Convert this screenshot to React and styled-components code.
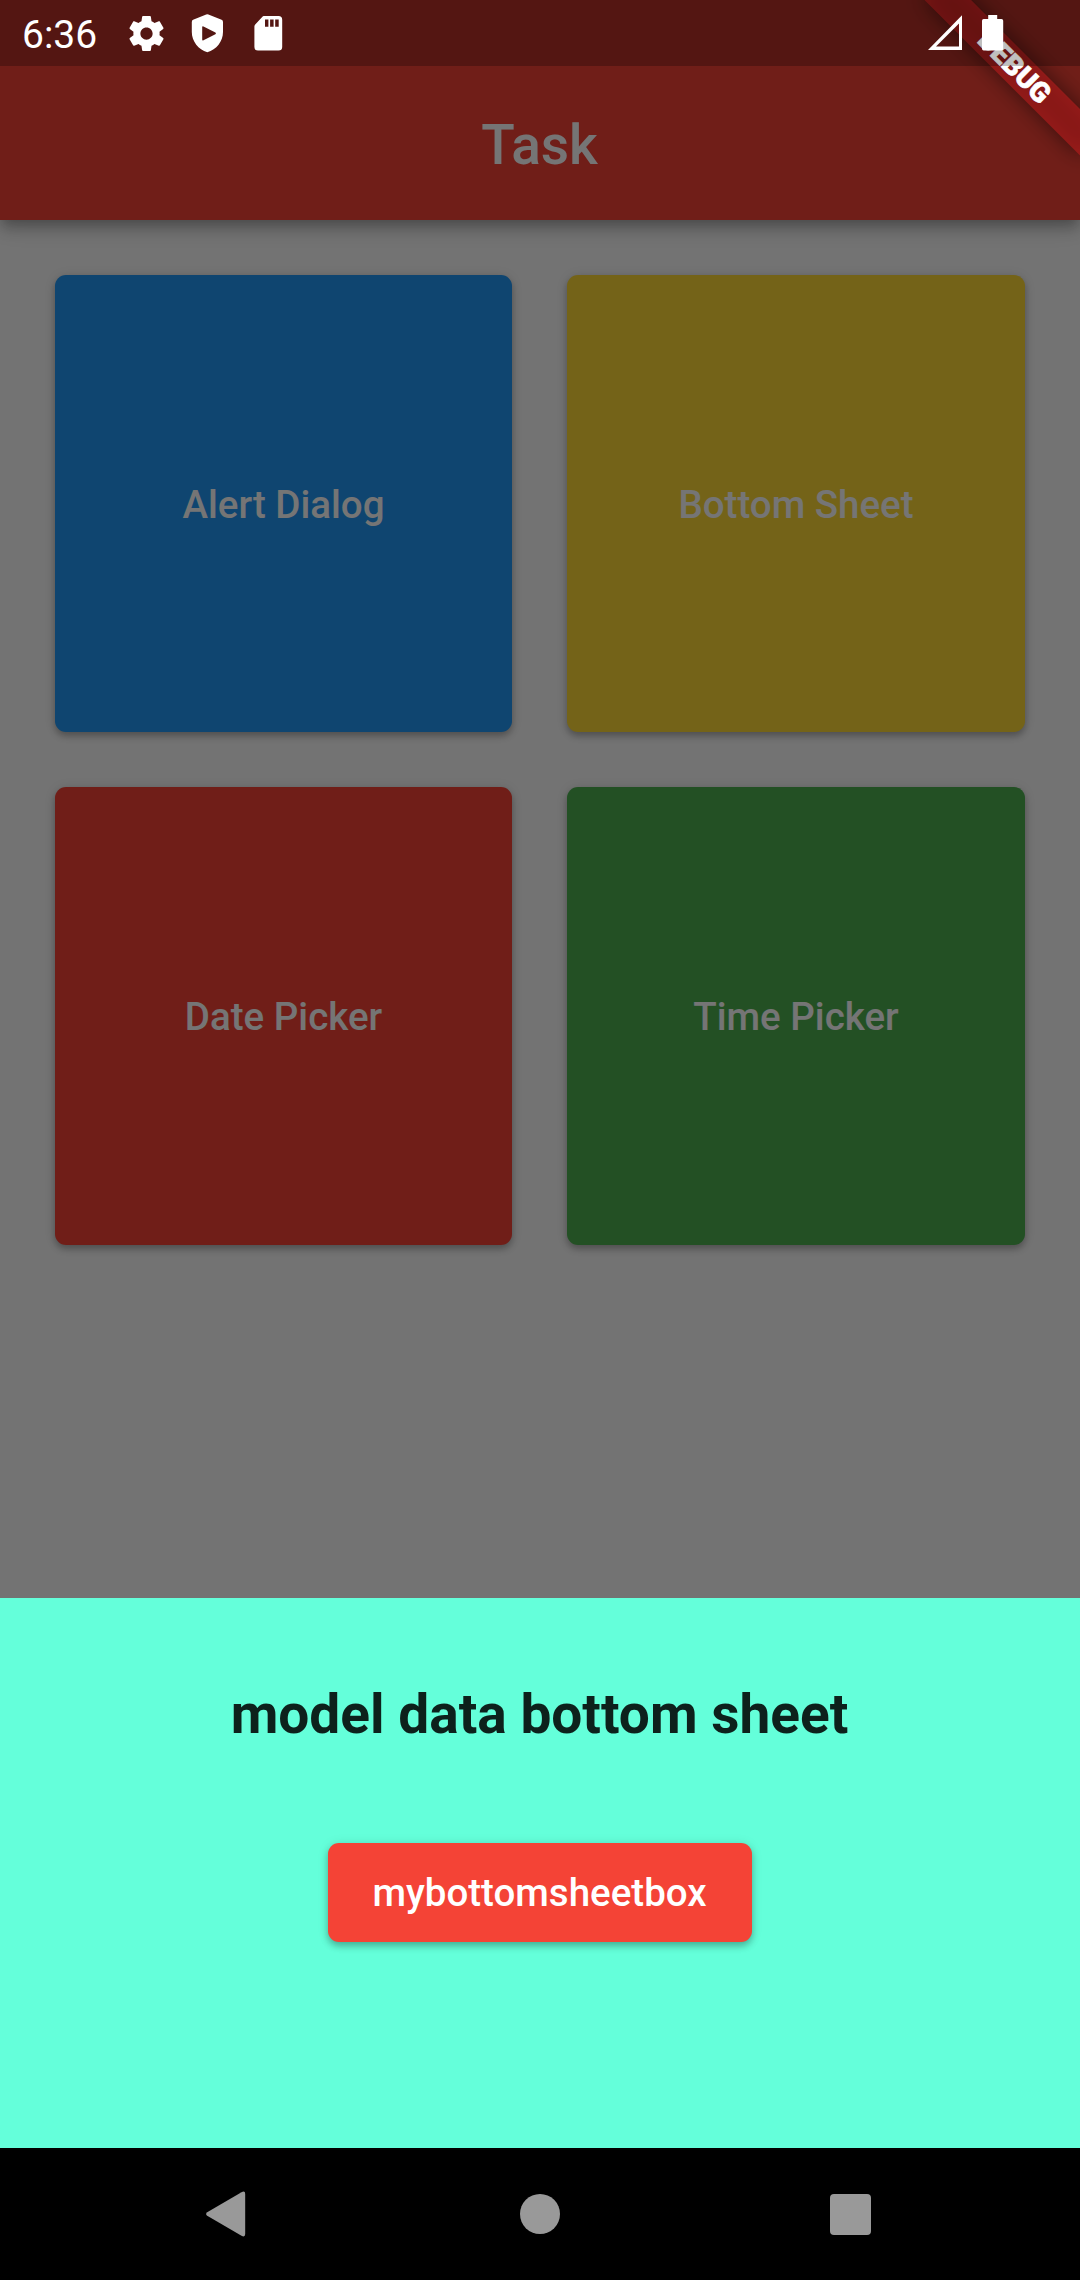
import React from "react";
import styled, { createGlobalStyle } from "styled-components";

const GlobalStyle = createGlobalStyle`
  * { box-sizing: border-box; }
  body { margin: 0; font-family: Roboto, "Liberation Sans", sans-serif; }
`;

const Screen = styled.div`
  position: relative;
  display: flex;
  flex-direction: column;
  width: 1080px;
  height: 2280px;
  overflow: hidden;
  background: #fafafa;
`;

const AppBar = styled.header`
  height: 220px;
  flex: none;
  padding: 66px 1px 0 0;
  display: flex;
  align-items: center;
  justify-content: center;
  background: #f44336;
  box-shadow: 0 5.5px 11px -2.75px rgba(0, 0, 0, 0.2), 0 11px 13.75px rgba(0, 0, 0, 0.14),
    0 2.75px 27.5px rgba(0, 0, 0, 0.12);
`;

const Title = styled.h1`
  margin: 4px 0 0;
  font-size: 55px;
  font-weight: 500;
  line-height: 64px;
  color: #fff;
`;

const Grid = styled.main`
  display: grid;
  grid-template-columns: 457px 458px;
  grid-template-rows: 457px 458px;
  gap: 55px;
  padding: 55px;
`;

const Button = styled.button`
  border: 0;
  margin: 0;
  padding: 1px 0 0;
  border-radius: 11px;
  color: #fff;
  background: ${(p) => p.$color};
  font: 500 38.5px/45px Roboto, "Liberation Sans", sans-serif;
  box-shadow: 0 4px 7px rgba(0, 0, 0, 0.26), 0 1px 12px rgba(0, 0, 0, 0.1);
`;

const SheetButton = styled(Button)`
  width: 424px;
  height: 99px;
  padding: 0 1px 0 0;
`;

const Overlay = styled.div`
  position: absolute;
  inset: 0;
  display: flex;
  flex-direction: column;
  justify-content: flex-end;
  background: rgba(0, 0, 0, 0.54);
`;

const Sheet = styled.section`
  height: 550px;
  display: flex;
  flex-direction: column;
  align-items: center;
  padding-top: 84px;
  gap: 96px;
  background: #64ffda;
`;

const SheetTitle = styled.h2`
  margin: 0;
  padding-right: 1px;
  font-size: 55px;
  line-height: 65px;
  font-weight: 700;
  color: rgba(0, 0, 0, 0.87);
`;

const NavBar = styled.nav`
  height: 132px;
  background: #000;
  display: flex;
  align-items: center;
  justify-content: space-between;
  padding: 0 206px;
`;

const Ribbon = styled.div`
  position: absolute;
  left: 970px;
  top: 77px;
  width: 220px;
  height: 33px;
  transform: rotate(45deg);
  transform-origin: 110px -77px;

  &::before,
  &::after {
    content: "";
    position: absolute;
    inset: 0;
  }
  &::before {
    background: rgba(0, 0, 0, 0.5);
    filter: blur(10.9px);
  }
  &::after {
    background: rgba(183, 28, 28, 0.627);
  }
`;

const RibbonText = styled.span`
  position: relative;
  z-index: 1;
  display: block;
  padding-left: 2px;
  text-align: center;
  color: #fff;
  font-size: 28px;
  font-weight: 900;
  line-height: 33px;
  -webkit-text-stroke: 0.7px #fff;
`;

const StatusBar = styled.div`
  position: absolute;
  inset: 0 0 auto;
  height: 66px;
  display: flex;
  align-items: center;
  padding: 0 76px 0 22px;
  background: rgba(0, 0, 0, 0.25);
`;

const Clock = styled.span`
  width: 104px;
  margin-top: 3px;
  font-size: 39px;
  line-height: 48px;
  color: #fff;
`;

const Notices = styled.div`
  display: flex;
  gap: 19px;
  flex: 1;
`;

const System = styled.div`
  display: flex;
  gap: 19px;
`;

const Icon = ({ w = 42, h = 66, children }) => (
  <svg width={w} height={h} viewBox={`0 0 ${w} ${h}`} fill="#fff" display="block">
    {children}
  </svg>
);

const GearIcon = () => (
  <Icon>
    <path
      transform="translate(-0.5 12.5) scale(1.75)"
      d="M19.43 12.98c.04-.32.07-.64.07-.98s-.03-.66-.07-.98l2.11-1.65c.19-.15.24-.42.12-.64l-2-3.46c-.12-.22-.39-.3-.61-.22l-2.49 1c-.52-.4-1.08-.73-1.69-.98l-.38-2.65A.488.488 0 0 0 14 2h-4c-.25 0-.46.18-.49.42l-.38 2.65c-.61.25-1.17.59-1.69.98l-2.49-1c-.23-.09-.49 0-.61.22l-2 3.46c-.13.22-.07.49.12.64l2.11 1.65c-.04.32-.07.65-.07.98s.03.66.07.98l-2.11 1.65c-.19.15-.24.42-.12.64l2 3.46c.12.22.39.3.61.22l2.49-1c.52.4 1.08.73 1.69.98l.38 2.65c.03.24.24.42.49.42h4c.25 0 .46-.18.49-.42l.38-2.65c.61-.25 1.17-.59 1.69-.98l2.49 1c.23.09.49 0 .61-.22l2-3.46c.12-.22.07-.49-.12-.64l-2.11-1.65zM12 15.5c-1.93 0-3.5-1.57-3.5-3.5s1.57-3.5 3.5-3.5 3.5 1.57 3.5 3.5-1.57 3.5-3.5 3.5z"
    />
  </Icon>
);

const ShieldIcon = () => (
  <Icon>
    <path
      fillRule="evenodd"
      d="M19.2 14.6Q20.3 14 21.4 14.6L34.6 19.8Q36 20.4 36 22V32C36 41.5 29.5 49.5 20.3 52.3C11.5 49.5 4.8 41.5 4.8 32V22Q4.8 20.4 6.1 19.8ZM15.2 27.2V39.5Q15.2 41 16.5 40.3L28.4 34.2Q29.6 33.4 28.4 32.6L16.5 26.4Q15.2 25.7 15.2 27.2Z"
    />
  </Icon>
);

const CardIcon = () => (
  <Icon>
    <path
      fillRule="evenodd"
      transform="translate(-1 0)"
      d="M16.8 16H31.5Q35.2 16 35.2 19.7V47Q35.2 50.6 31.5 50.6H11Q7.4 50.6 7.4 47V26.6Q7.4 25.4 8.2 24.6L15.2 17Q16 16 16.8 16ZM18 19.4V26.7H21.4V19.4ZM23.1 19.4V26.7H26.6V19.4ZM28.2 19.4V26.7H31.7V19.4Z"
    />
  </Icon>
);

const SignalIcon = () => (
  <Icon w={35}>
    <path fillRule="evenodd" d="M0 50L34 15.2V50ZM8 46.6H31V23.5Z" />
  </Icon>
);

const BatteryIcon = () => (
  <Icon w={22}>
    <path d="M6.2 15H15.2V19H19.5Q21.2 19 21.2 20.7V48.8Q21.2 50.5 19.5 50.5H1.7Q0 50.5 0 48.8V20.7Q0 19 1.7 19H6.2Z" />
  </Icon>
);

const BackIcon = () => (
  <svg width="40" height="46" viewBox="0 0 40 46" fill="#999">
    <path d="M1.2 21.2L35.5 1.2Q39.2 -.6 39.2 3V43Q39.2 46.6 35.5 44.8L1.2 24.8Q-1 23 1.2 21.2Z" />
  </svg>
);

const HomeIcon = styled.span`
  width: 40px;
  height: 40px;
  border-radius: 50%;
  margin-left: 4px;
  background: #999;
`;

const RecentsIcon = styled.span`
  width: 41px;
  height: 41px;
  border-radius: 4px;
  margin-right: 3px;
  background: #999;
`;

const TILES = [
  { label: "Alert Dialog", color: "#2196f3" },
  { label: "Bottom Sheet", color: "#fdd835" },
  { label: "Date Picker", color: "#f44336" },
  { label: "Time Picker", color: "#4caf50" },
];

export default function App() {
  return (
    <Screen>
      <GlobalStyle />
      <AppBar>
        <Title>Task</Title>
      </AppBar>
      <Grid>
        {TILES.map((t) => (
          <Button key={t.label} $color={t.color}>
            {t.label}
          </Button>
        ))}
      </Grid>
      <Overlay>
        <Sheet>
          <SheetTitle>model data bottom sheet</SheetTitle>
          <SheetButton $color="#f44336">mybottomsheetbox</SheetButton>
        </Sheet>
        <NavBar>
          <BackIcon />
          <HomeIcon />
          <RecentsIcon />
        </NavBar>
      </Overlay>
      <Ribbon>
        <RibbonText>DEBUG</RibbonText>
      </Ribbon>
      <StatusBar>
        <Clock>6:36</Clock>
        <Notices>
          <GearIcon />
          <ShieldIcon />
          <CardIcon />
        </Notices>
        <System>
          <SignalIcon />
          <BatteryIcon />
        </System>
      </StatusBar>
    </Screen>
  );
}
